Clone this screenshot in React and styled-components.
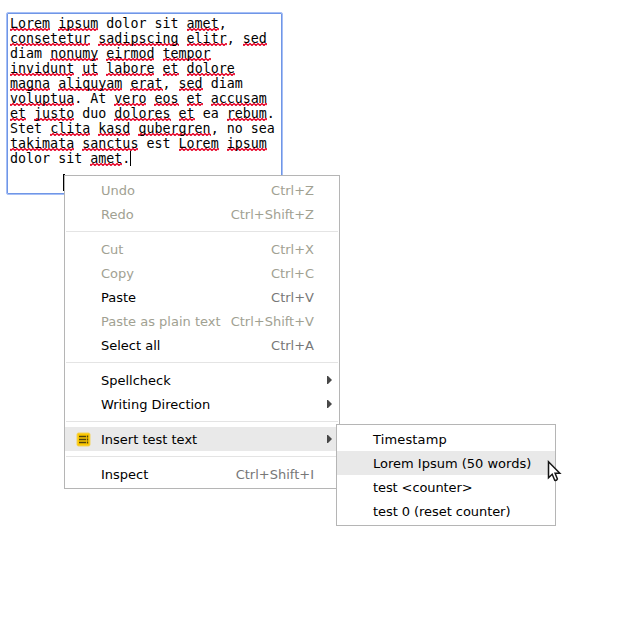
import React from "react";
import styled, { createGlobalStyle } from "styled-components";

const Global = createGlobalStyle`
  html, body { margin: 0; background: #fff; overflow: hidden; }
`;

const Page = styled.main`
  position: relative;
  box-sizing: border-box;
  width: 632px;
  height: 630px;
  padding: 12px 0 0 6px;
  background: #fff;
`;

const TextBox = styled.div`
  box-sizing: border-box;
  width: 277px;
  height: 183px;
  padding: 3px;
  border: 1px solid #a6bff6;
  border-radius: 2px;
  box-shadow: inset 0 0 0 1px #7096e6;
  background: #fff;
  color: #000;
  font: 13.333px/15px "DejaVu Sans Mono", monospace;
`;

const Line = styled.div`
  height: 15px;
  white-space: pre;
`;

const squiggle =
  "%3Csvg xmlns='http://www.w3.org/2000/svg' width='4' height='3'%3E%3Cpath d='M-1 .5L1 2.5L3 .5L5 2.5' fill='none' stroke='%23e60024' stroke-width='1.3'/%3E%3C/svg%3E";

const Misspelled = styled.span`
  display: inline-block;
  height: 15px;
  vertical-align: top;
  background: url("data:image/svg+xml,${squiggle}") 0 12px repeat-x;
`;

const Caret = styled.span`
  display: inline-block;
  width: 1px;
  height: 15px;
  vertical-align: top;
  background: #000;
`;

const DropCaret = styled.div`
  position: absolute;
  left: 63px;
  top: 174px;
  width: 2px;
  height: 17px;
  background: #000;
`;

const Menu = styled.div`
  position: absolute;
  left: ${(p) => p.$x}px;
  top: ${(p) => p.$y}px;
  box-sizing: border-box;
  width: ${(p) => p.$width}px;
  padding: 2px 0;
  border: 1px solid #b5b5b5;
  background: #fff;
  font: 13px/24px "DejaVu Sans", sans-serif;
`;

const Item = styled.div`
  display: grid;
  grid-template-columns: 36px 1fr auto 25px;
  align-items: center;
  height: 24px;
  white-space: nowrap;
  color: ${(p) => (p.$disabled ? "#a1a192" : "#000")};
  background: ${(p) => (p.$active ? "#e9e9e9" : "transparent")};
`;

const IconSlot = styled.span`
  display: flex;
  padding-left: 11px;
`;

const Label = styled.span`
  padding-top: 2px;
  line-height: 22px;
  letter-spacing: ${(p) => p.$tracking || 0}px;
`;

const Shortcut = styled.span`
  padding-top: 2px;
  line-height: 22px;
  color: ${(p) => (p.$disabled ? "#a1a192" : "#777")};
`;

const ArrowSlot = styled.span`
  display: flex;
  justify-content: flex-end;
  padding-right: 7px;
`;

const Separator = styled.div`
  height: 1px;
  margin: 5px 1px;
  background: #e4e4e4;
`;

const Pointer = styled.svg`
  position: absolute;
  left: 547px;
  top: 460px;
`;

const lines = [
  "*Lorem* *ipsum* dolor sit *amet*,",
  "*consetetur* *sadipscing* *elitr*, *sed*",
  "diam *nonumy* *eirmod* *tempor*",
  "*invidunt* *ut* *labore* *et* *dolore*",
  "*magna* *aliquyam* *erat*, *sed* diam",
  "*voluptua*. At *vero* *eos* *et* *accusam*",
  "*et* *justo* duo *dolores* *et* ea *rebum*.",
  "Stet *clita* *kasd* *gubergren*, no sea",
  "*takimata* *sanctus* est *Lorem* *ipsum*",
  "dolor sit *amet*.",
];

const contextItems = [
  { label: "Undo", keys: "Ctrl+Z", disabled: true },
  { label: "Redo", keys: "Ctrl+Shift+Z", disabled: true },
  null,
  { label: "Cut", keys: "Ctrl+X", disabled: true },
  { label: "Copy", keys: "Ctrl+C", disabled: true },
  { label: "Paste", keys: "Ctrl+V" },
  { label: "Paste as plain text", keys: "Ctrl+Shift+V", disabled: true },
  { label: "Select all", keys: "Ctrl+A" },
  null,
  { label: "Spellcheck", submenu: true },
  { label: "Writing Direction", submenu: true },
  null,
  { label: "Insert test text", submenu: true, active: true, icon: true },
  null,
  { label: "Inspect", keys: "Ctrl+Shift+I" },
];

const insertItems = [
  { label: "Timestamp", tracking: 0.15 },
  { label: "Lorem Ipsum (50 words)", active: true },
  { label: "test <counter>", tracking: -0.1 },
  { label: "test 0 (reset counter)", tracking: -0.06 },
];

function TextIcon() {
  return (
    <svg width="15" height="15" viewBox="0 0 15 15">
      <rect x="1" y="1" width="13" height="13" rx="1.5" fill="#fcc800" stroke="#f3d35f" />
      <path d="M3 4.5h7M3 7.5h7M3 10.5h7" stroke="#51430c" strokeWidth="1.7" />
      <path d="M11.5 3.5v2M11.5 6.5v2M11.5 9.5v2" stroke="#51430c" strokeWidth="1.4" />
    </svg>
  );
}

function Arrow() {
  return (
    <svg width="5" height="8" viewBox="0 0 5 8">
      <path d="M0 0H1L5 4L1 8H0Z" fill="#484848" />
    </svg>
  );
}

function MenuItem({ item }) {
  return (
    <Item $disabled={item.disabled} $active={item.active}>
      <IconSlot>{item.icon && <TextIcon />}</IconSlot>
      <Label $tracking={item.tracking}>{item.label}</Label>
      <Shortcut $disabled={item.disabled}>{item.keys}</Shortcut>
      <ArrowSlot>{item.submenu && <Arrow />}</ArrowSlot>
    </Item>
  );
}

export default function App() {
  return (
    <Page>
      <Global />
      <TextBox>
        {lines.map((line, i) => (
          <Line key={i}>
            {line.split("*").map((part, j) =>
              j % 2 ? <Misspelled key={j}>{part}</Misspelled> : part
            )}
            {i === lines.length - 1 && <Caret />}
          </Line>
        ))}
      </TextBox>
      <DropCaret />
      <Menu $x={64} $y={175} $width={276}>
        {contextItems.map((item, i) =>
          item ? <MenuItem key={i} item={item} /> : <Separator key={i} />
        )}
      </Menu>
      <Menu $x={336} $y={424} $width={220}>
        {insertItems.map((item) => (
          <MenuItem key={item.label} item={item} />
        ))}
      </Menu>
      <Pointer width="15" height="23" viewBox="0 0 15 23">
        <path
          d="M1.5 1.8V17.7L5.2 14.3L7.7 20.2Q9.5 20.9 10.4 19L8.1 13.2H12.8Z"
          fill="#fff"
          stroke="#151515"
          strokeWidth="1.5"
        />
      </Pointer>
    </Page>
  );
}
